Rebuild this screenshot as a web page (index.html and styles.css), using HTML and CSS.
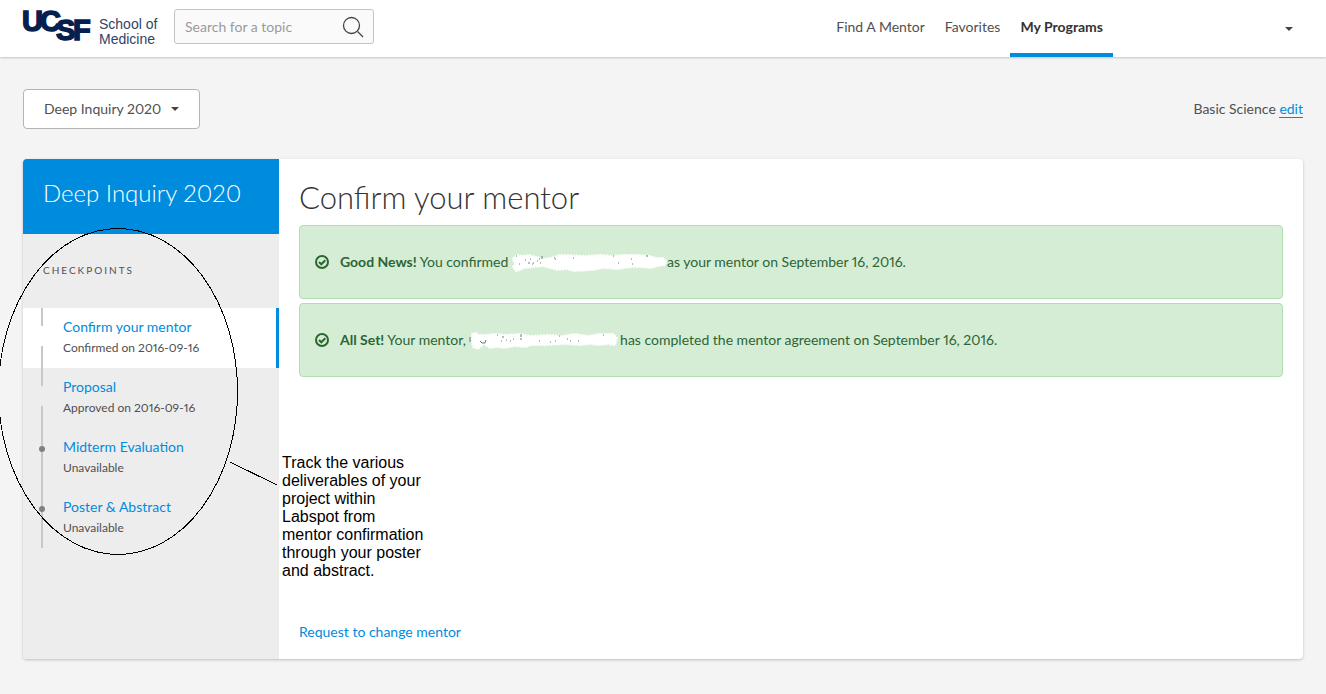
FILE: index.html
```html
<!DOCTYPE html>
<html lang="en">
<head>
<meta charset="utf-8">
<meta name="viewport" content="width=device-width, initial-scale=1">
<title>Deep Inquiry 2020</title>
<link rel="stylesheet" href="styles.css">
</head>
<body>
<header class="topbar">
  <a class="logo" href="#" aria-label="UCSF School of Medicine">
    <svg class="logo-mark" viewBox="0 0 68 34" aria-hidden="true">
      <g class="logo-letters">
        <text x="-1" y="23">U</text>
        <text x="17" y="23">C</text>
        <text x="33" y="32">S</text>
        <text x="50" y="32">F</text>
      </g>
    </svg>
    <span class="logo-name">School of<br>Medicine</span>
  </a>
  <form class="search">
    <input class="search-input" type="text" placeholder="Search for a topic" aria-label="Search for a topic">
    <button class="search-button" type="button" aria-label="Search">
      <svg class="search-icon" viewBox="0 0 22 22" aria-hidden="true"><circle cx="9.5" cy="9.5" r="8"/><path d="M15.5 15.5 21 21"/></svg>
    </button>
  </form>
  <nav class="nav">
    <a class="nav-link" href="#">Find A Mentor</a>
    <a class="nav-link" href="#">Favorites</a>
    <a class="nav-link nav-link-active" href="#">My Programs</a>
    <button class="account" type="button" aria-label="Account"><span class="caret"></span></button>
  </nav>
</header>

<main class="page">
  <div class="toolbar">
    <button class="program-select" type="button">Deep Inquiry 2020<span class="caret"></span></button>
    <p class="track">Basic Science <a class="edit" href="#">edit</a></p>
  </div>
  <div class="card">
    <aside class="sidebar">
      <h2 class="sidebar-title">Deep Inquiry 2020</h2>
      <h3 class="sidebar-heading">CHECKPOINTS</h3>
      <ul class="steps">
        <li class="step step-done step-active"><a class="step-link" href="#">Confirm your mentor</a><span class="step-status">Confirmed on 2016-09-16</span></li>
        <li class="step step-done"><a class="step-link" href="#">Proposal</a><span class="step-status">Approved on 2016-09-16</span></li>
        <li class="step step-open"><a class="step-link" href="#">Midterm Evaluation</a><span class="step-status">Unavailable</span></li>
        <li class="step step-open"><a class="step-link" href="#">Poster &amp; Abstract</a><span class="step-status">Unavailable</span></li>
      </ul>
    </aside>
    <section class="content">
      <h1 class="title">Confirm your mentor</h1>
      <div class="alert">
        <svg class="check" viewBox="0 0 14 14" aria-hidden="true"><circle cx="7" cy="7" r="6"/><path d="M4 7l2.300 2.300 4-4"/></svg>
        <p class="alert-text"><strong>Good News!</strong> You confirmed <svg class="smudge smudge-long" viewBox="0 0 155 18" aria-hidden="true"><path class="paint" d="M1 5 2 3 5 1 11 2 17 1 24 3 31 5 38 4 42 3 48 1 75 2 88 1 100 2 112 1 126 1 138 2 144 4 151 4 154 7 153 11 146 12 139 14 128 13 120 13 105 15 92 14 80 16 62 17 54 15 46 16 38 14 31 12 22 13 12 14 8 16 4 17 1 13 3 10Z"/><path class="specks" d="M4 2h1M13 6h1M18 5h1M16 9h2M20 10h1M21 9h1M25 7h1M27 5h1M28 9h1M7 10h1M30 2v3M42 4h1M43 5h1M61 4h1M101 2h1M106 9h1M120 10h1M119 5h1M134 2h2"/></svg>as your mentor on September 16, 2016.</p>
      </div>
      <div class="alert">
        <svg class="check" viewBox="0 0 14 14" aria-hidden="true"><circle cx="7" cy="7" r="6"/><path d="M4 7l2.300 2.300 4-4"/></svg>
        <p class="alert-text"><strong>All Set!</strong> Your mentor, <svg class="smudge smudge-short" viewBox="0 0 147 18" aria-hidden="true"><path class="paint" d="M2 2 6 1 9 3 16 3 25 2 36 3 50 2 60 4 80 3 92 4 105 2 118 4 130 2 143 2 147 6 145 13 138 12 130 13 120 12 110 13 94 12 75 13 62 13 55 15 45 14 35 16 26 15 20 16 14 12 8 17 3 15 2 10Z"/><path class="specks" d="M0 5v5M10 9l2 2h3l1-3M27 3h1M32 5h2M31 9h1M36 8h1M40 9h1M43 7h1M51 2v3M50 7h2M69 9h1M80 10h1M85 9h1M89 4h1M97 7h1M100 9h1M108 9h1M133 3h1"/></svg> has completed the mentor agreement on September 16, 2016.</p>
      </div>
      <a class="change" href="#">Request to change mentor</a>
    </section>
  </div>
</main>

<svg class="note-lines" width="290" height="570" aria-hidden="true"><ellipse cx="118" cy="391.5" rx="119.5" ry="163"/><path d="M230 462 277 485"/></svg>
<p class="note">Track the various deliverables of your project within Labspot from mentor confirmation through your poster and abstract.</p>
</body>
</html>
```

FILE: styles.css
```css
* { box-sizing: border-box; }
body {
  margin: 0;
  min-height: 100vh;
  position: relative;
  background: #f4f4f4;
  color: #505050;
  font: 14px/20px Lato, "Open Sans", sans-serif;
  font-variant-numeric: proportional-nums;
}
h1, h2, h3, p, ul { margin: 0; padding: 0; }
a { color: #008cde; text-decoration: none; }
button { font: inherit; color: inherit; cursor: pointer; }

.topbar {
  display: flex;
  height: 57px;
  padding: 0 23px;
  background: #fff;
  box-shadow: 0 1px 2px rgba(0, 0, 0, .2);
}
.logo { display: flex; gap: 8px; width: 151px; padding-top: 8px; color: #304468; }
.logo-mark { width: 68px; height: 34px; flex: none; overflow: visible; }
.logo-letters { font: bold 29px "Liberation Sans", Arial, sans-serif; fill: #05204e; stroke: #05204e; stroke-width: 1.5; }
.logo-name { padding-top: 9px; font: 14px/15px "Liberation Sans", Arial, sans-serif; white-space: nowrap; }
.search {
  display: flex;
  align-items: center;
  width: 200px;
  height: 35px;
  margin-top: 9px;
  padding: 0 9px 0 10px;
  background: #fafafa;
  border: 1px solid #c4c4c4;
  border-radius: 3px;
}
.search-input { flex: 1; min-width: 0; padding: 0; border: 0; background: none; font: inherit; color: #505050; outline: 0; }
.search-input::placeholder { color: #9b9b9b; opacity: 1; }
.search-button { display: flex; padding: 0; border: 0; background: none; }
.search-icon { width: 22px; height: 22px; fill: none; stroke: #444; stroke-width: 1.3; }
.nav { display: flex; margin-left: auto; }
.nav-link { padding: 17px 10px 0; color: #505050; }
.nav-link-active { color: #333; font-weight: bold; border-bottom: 4px solid #008cde; }
.account { display: flex; align-items: center; justify-content: flex-end; width: 190px; padding: 0 10px; border: 0; background: none; }
.caret { width: 0; height: 0; border: 4px solid transparent; border-top-color: #444; border-bottom: 0; }

.page { padding: 32px 23px 35px; }
.toolbar { display: flex; align-items: center; justify-content: space-between; margin-bottom: 30px; }
.program-select {
  display: flex;
  align-items: center;
  gap: 10px;
  height: 40px;
  padding: 0 20px;
  background: #fff;
  border: 1px solid #b4b4b4;
  border-radius: 4px;
}
.edit { border-bottom: 1px solid #008cde; }

.card {
  display: grid;
  grid-template-columns: 1fr 4fr;
  min-height: 500px;
  background: #fff;
  border-radius: 4px;
  box-shadow: 0 1px 3px rgba(0, 0, 0, .22);
  overflow: hidden;
}
.sidebar { background: #ededed; }
.sidebar-title { padding: 19px 20px 26px; background: #008cde; color: #fff; font-size: 24px; line-height: 30px; font-weight: 300; }
.sidebar-heading { padding: 26px 20px 28px; font-size: 10px; line-height: 20px; font-weight: 400; letter-spacing: 2px; }
.steps { list-style: none; }
.step { position: relative; display: flex; flex-direction: column; height: 60px; padding: 9px 20px 0 40px; }
.step::before { content: ""; position: absolute; left: 18px; top: 0; width: 2px; height: 60px; background: #c8c8c8; }
.step-done::before { background: linear-gradient(#c8c8c8 18px, transparent 18px, transparent 38px, #c8c8c8 38px); }
.step-open::after { content: ""; position: absolute; left: 16px; top: 18px; width: 6px; height: 6px; border-radius: 50%; background: #808080; }
.step-active { background: #fff; border-right: 3px solid #008cde; }
.step-link { font-size: 14px; line-height: 20px; }
.step-status { font-size: 12px; line-height: 22px; }

.content { display: flex; flex-direction: column; gap: 4px; padding: 18px 20px 17px; }
.title { padding: 0 0 4px; color: #333; font-size: 31px; line-height: 40px; font-weight: 300; }
.alert {
  display: flex;
  align-items: center;
  gap: 11px;
  min-height: 74px;
  padding: 8px 15px;
  background: #d6edd5;
  border: 1px solid #b0dfb4;
  border-radius: 4px;
  color: #2c6535;
}
.check { width: 14px; height: 14px; flex: none; fill: none; stroke: #2c6530; stroke-width: 2; }
.smudge { height: 18px; vertical-align: middle; overflow: visible; }
.smudge-long { width: 155px; }
.smudge-short { width: 147px; }
.paint { fill: #fff; stroke: #fff; stroke-width: 2; stroke-dasharray: 2 1; }
.specks { fill: none; stroke: #62836a; stroke-width: 1; }
.change { align-self: flex-start; margin-top: auto; }

.note-lines { position: absolute; left: 0; top: 0; fill: none; stroke: #000; stroke-width: 1; shape-rendering: crispEdges; pointer-events: none; }
.note { position: absolute; left: 282px; top: 454px; width: 145px; color: #000; font: 16px/18px "Liberation Sans", Arial, sans-serif; }
```
